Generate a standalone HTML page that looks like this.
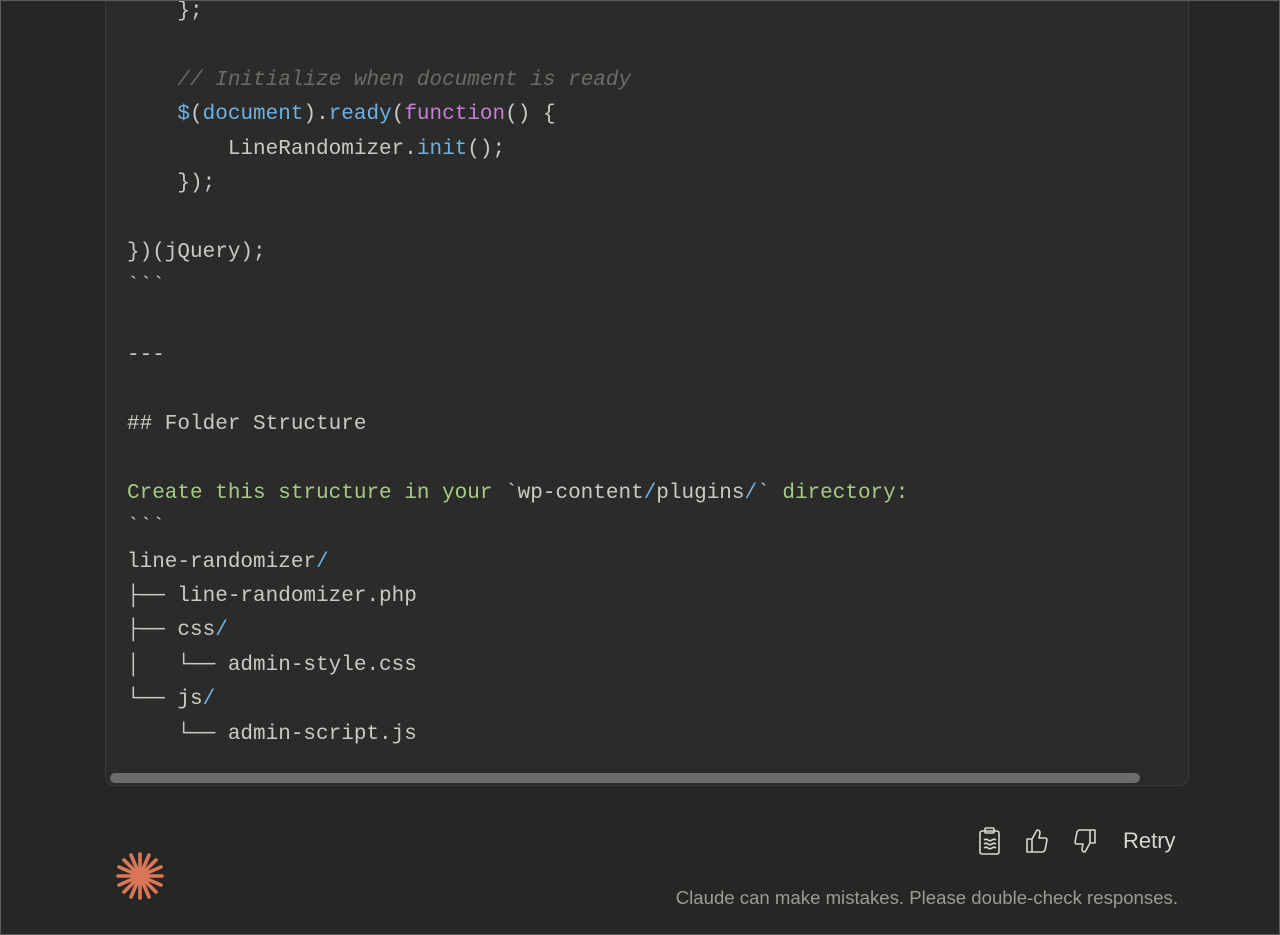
<!DOCTYPE html>
<html><head><meta charset="utf-8"><style>
html,body{margin:0;padding:0;}
body{width:1280px;height:935px;background:#262624;position:relative;overflow:hidden;font-family:"Liberation Sans",sans-serif;}
.frame{position:absolute;inset:0;border:1px solid #5a5a5a;box-sizing:border-box;pointer-events:none;z-index:5}
.code{position:absolute;left:105px;top:-10px;width:1084px;height:796px;background:#2b2b2a;border:1px solid #3c3c3a;border-top:none;border-radius:0 0 10px 10px;box-sizing:border-box;}
pre{position:absolute;left:127px;top:-5px;margin:0;font-family:"Liberation Mono",monospace;font-size:21px;line-height:34.4px;color:#c9c9c5;}
.c{color:#6b6b68;font-style:italic}.b{color:#6cb1e6}.p{color:#c77dd8}.g{color:#a6c98a}
.sb{position:absolute;left:110px;top:773px;width:1030px;height:10px;border-radius:5px;background:#6c6c6a}
.logo{position:absolute;left:114px;top:850px}
.icons{position:absolute;top:826px}
.retry{position:absolute;left:1123px;top:828px;font-size:22px;color:#d6d6d2}
.disc{position:absolute;right:102px;top:887px;font-size:18.6px;color:#9b9b97}
</style></head><body>
<div class="code"></div>
<pre>    };

    <span class="c">// Initialize when document is ready</span>
    <span class="b">$</span>(<span class="b">document</span>).<span class="b">ready</span>(<span class="p">function</span>() {
        LineRandomizer.<span class="b">init</span>();
    });

})(jQuery);
&#96;&#96;&#96;

---

## Folder Structure

<span class="g">Create this structure in your </span>&#96;wp-content<span class="b">/</span>plugins<span class="b">/</span>&#96;<span class="g"> directory:</span>
&#96;&#96;&#96;
line-randomizer<span class="b">/</span>
├── line-randomizer.php
├── css<span class="b">/</span>
│   └── admin-style.css
└── js<span class="b">/</span>
    └── admin-script.js</pre>
<div class="sb"></div>
<svg class="logo" width="52" height="52" viewBox="0 0 52 52"><g stroke="#d97757" stroke-width="3.6" stroke-linecap="round">
<line x1="26" y1="4" x2="26" y2="48"/><line x1="4" y1="26" x2="48" y2="26"/>
<line x1="10" y1="10" x2="42" y2="42"/><line x1="42" y1="10" x2="10" y2="42"/>
<line x1="17" y1="5" x2="35" y2="47"/><line x1="35" y1="5" x2="17" y2="47"/>
<line x1="5" y1="17" x2="47" y2="35"/><line x1="5" y1="35" x2="47" y2="17"/>
</g></svg>
<svg class="icons" style="left:978px" width="24" height="30" viewBox="0 0 24 30" fill="none" stroke="#d6d6d2" stroke-width="1.6" stroke-linejoin="round"><rect x="2" y="5" width="19" height="23" rx="2"/><rect x="7" y="2" width="9" height="5" rx="1"/><path d="M6 14q2-1.5 4 0t4 0t4 0M6 18q2-1.5 4 0t4 0t4 0M6 22q2-1.5 4 0t4 0t4 0"/></svg>
<svg class="icons" style="left:1025px" width="24" height="30" viewBox="0 0 24 30" fill="none" stroke="#d6d6d2" stroke-width="1.6" stroke-linejoin="round"><path d="M2 13h5v13H2zM7 13l5-9q3 0 3 3l-1 5h6q2 0 2 2l-2 10q-1 2-3 2H7"/></svg>
<svg class="icons" style="left:1073px" width="24" height="30" viewBox="0 0 24 30" fill="none" stroke="#d6d6d2" stroke-width="1.6" stroke-linejoin="round"><path d="M22 17h-5V4h5zM17 17l-5 9q-3 0-3-3l1-5H4q-2 0-2-2l2-10q1-2 3-2h10"/></svg>
<div class="retry">Retry</div>
<div class="disc">Claude can make mistakes. Please double-check responses.</div>
<div class="frame"></div>
</body></html>
